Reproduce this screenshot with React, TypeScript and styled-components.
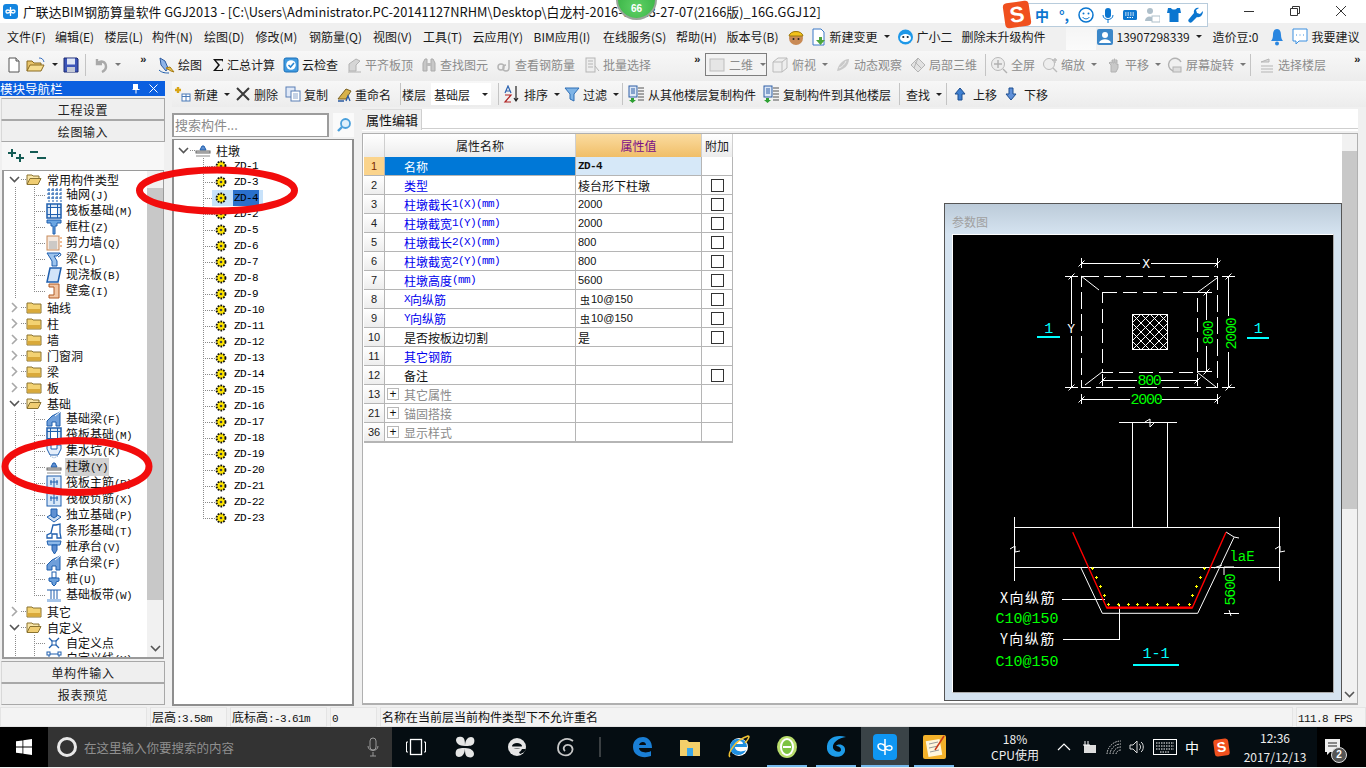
import React from 'react';
import styled, { createGlobalStyle } from 'styled-components';

const cjk = `"Noto Sans CJK SC", "Liberation Sans", sans-serif`;

const Global = createGlobalStyle`
  html, body { margin: 0; padding: 0; background: #f0f0f0; }
  * { box-sizing: border-box; }
  body { font-family: ${cjk}; font-size: 12px; color: #111; overflow: hidden; }
`;

const Page = styled.div`
  position: relative; width: 1366px; height: 768px; overflow: hidden;
  display: flex; flex-direction: column; background: #f0f0f0;
`;

/* ---------- title ---------- */
const TitleBar = styled.div`
  height: 23px; background: #fff; display: flex; align-items: center; padding: 0 0 1px 3px; flex: none;
`;
const AppLogo = styled.div`
  width: 15px; height: 15px; border-radius: 3px; background: #1485e0; display: flex;
  align-items: center; justify-content: center; margin-right: 5px; flex: none;
`;
const TitleText = styled.div`
  font-size: 12.8px; white-space: nowrap; color: #111; letter-spacing: 0.05px; flex: 1;
`;
const WinButtons = styled.div`display: flex; align-items: center; padding-right: 2px; flex: none;`;
const WinBtn = styled.div`width: 46px; height: 22px; display: flex; align-items: center; justify-content: center;`;

/* ---------- menu ---------- */
const MenuBar = styled.div`
  height: 27px; flex: none; position: relative; display: flex; align-items: center; background: #f0f0f0;
  padding-left: 7px; white-space: nowrap;
`;
const MenuItem = styled.div<{ $w: number }>`
  width: ${p => p.$w}px; flex: none; display: flex; align-items: center; gap: 3px; font-size: 12px; color: #1a1a1a;
`;
const WhitePatch = styled.div`width: 30px; height: 27px; flex: none; background: linear-gradient(#f4f4f4, #fbfbfb);`;
const Caret = styled.span`
  display: inline-block; flex: none; width: 0; height: 0; border-left: 3px solid transparent; border-right: 3px solid transparent;
  border-top: 3px solid #222; margin-left: 3px;
`;
const GreyCaret = styled(Caret)`border-top-color: #777;`;

/* ---------- toolbars ---------- */
const Bar = styled.div<{ $pad: number; $h: number; $lift?: number }>`
  height: ${p => p.$h}px; flex: none; display: flex; align-items: center; padding-left: ${p => p.$pad}px; padding-bottom: ${p => p.$lift ?? 0}px;
  background: linear-gradient(#f7f7f7, #f1f1f1 60%, #ececec); white-space: nowrap;
`;
const TopGap = styled.div`height: 1px; flex: none; background: #f0f0f0;`;
const Tool = styled.div<{ $w: number; $off?: boolean }>`
  width: ${p => p.$w}px; flex: none; display: flex; align-items: center; gap: 3px; height: 100%;
  font-size: 12px; color: ${p => (p.$off ? '#8c8c8c' : '#1a1a1a')}; position: relative;
`;
const Sep = styled.div`width: 1px; height: 22px; background: #c4c4c4;`;
const Grip = styled.span`font: bold 11px "Liberation Mono", monospace; color: #222; margin-top: -10px; letter-spacing: -2px;`;
const Combo = styled.div`
  width: 62px; height: 23px; border: 1px solid #7e7e7e; display: flex; align-items: center; gap: 4px; padding-left: 3px; color: #8c8c8c; background: #f3f3f3;
`;
const FloorCombo = styled.div`
  width: 60px; height: 22px; background: #fff; display: flex; align-items: center; justify-content: space-between; padding: 0 3px 0 3px; color: #1a1a1a;
`;
const MoveText = styled.span`margin-left: 4px;`;

/* ---------- main ---------- */
const Main = styled.div`height: 625px; flex: none; display: flex;`;
const Nav = styled.div`width: 165px; flex: none; display: flex; flex-direction: column;`;
const NavHead = styled.div`
  height: 15px; flex: none; background: #0b5fe0; color: #fff; font-size: 12.5px; line-height: 15px; padding: 0 4px 0 0;
  display: flex; justify-content: space-between; align-items: center;
`;
const NavIcons = styled.div`display: flex; gap: 9px; align-items: center; padding-right: 3px;`;
const NavBtn = styled.div<{ $mt?: number }>`
  height: 22px; margin: ${p => p.$mt ?? 0}px 0 0 1px; width: 164px; flex: none; border: 1px solid #a8a8a8; border-left-color: #d8d8d8; background: #efefef;
  display: flex; align-items: center; justify-content: center; font-size: 12px; letter-spacing: 0.6px; color: #222;
`;
const NavTools = styled.div`
  height: 28px; flex: none; margin: 0 1px 0 2px; display: flex; align-items: center; padding-left: 5px; gap: 5px; background: #f7f7f7;
`;
const TreeBox = styled.div`
  height: 489px; flex: none; margin: 0 1px 2px 2px; border: 2px solid #9a9a9a; border-top-width: 1px; border-right-width: 1px; background: #fff; position: relative; overflow: hidden;
`;
const Scroll = styled.div`
  position: absolute; right: 0; top: 0; bottom: 0; width: 16px; background: #f1f1f1; display: flex; flex-direction: column; align-items: center;
`;
const ScrollArrow = styled.div`height: 17px; flex: none; display: flex; align-items: center; justify-content: center;`;
const ScrollThumb = styled.div<{ $h: number }>`width: 100%; height: ${p => p.$h}px; background: #c8c8c8; flex: none;`;
const ScrollFill = styled.div`flex: 1;`;

const Row = styled.div<{ $guide?: boolean }>`
  height: 16px; display: flex; align-items: center; white-space: nowrap; font-size: 12px; color: #111;
  ${p => p.$guide ? `background: linear-gradient(#8a8a8a 50%, transparent 50%) 11px 0 / 1px 2px repeat-y;` : ''}
`;
const RootRow = styled(Row)`padding-left: 4px;`;
const Chev = styled.div`width: 13px; flex: none; display: flex; justify-content: center;`;
const RootStub = styled.div`width: 5px; flex: none; height: 1px; background: linear-gradient(90deg, #8a8a8a 50%, transparent 50%) 0 0 / 2px 1px;`;
const RootLabel = styled.span`margin-left: 5px;`;
const ChildRow = styled(Row)`padding-left: 30px;`;
const Stub = styled.div<{ $last?: boolean }>`
  width: 11px; height: 16px; flex: none;
  background:
    linear-gradient(#8a8a8a 50%, transparent 50%) 0 0 / 1px 2px repeat-y,
    linear-gradient(90deg, #8a8a8a 50%, transparent 50%) 0 8px / 2px 1px repeat-x;
  clip-path: ${p => (p.$last ? 'polygon(0 0, 1px 0, 1px 8px, 100% 8px, 100% 9px, 0 9px)' : 'polygon(0 0, 1px 0, 1px 8px, 100% 8px, 100% 9px, 1px 9px, 1px 100%, 0 100%)')};
`;
const ChildIcon = styled.div`width: 18px; height: 16px; flex: none; display: flex; align-items: center; justify-content: center; margin-right: 2px;`;
const ChildLabel = styled.span<{ $on?: boolean }>`
  ${p => p.$on ? 'background: #d2d2d2;' : ''} padding: 0 1px; line-height: 16px;
`;
const Latin = styled.span`font-family: "Liberation Mono", monospace; font-size: 11px; letter-spacing: -0.6px;`;

const Content = styled.div`flex: 1; margin-left: 7px; display: flex; flex-direction: column; min-width: 0;`;
const Panels = styled.div`flex: 1; display: flex; min-height: 0;`;
const Middle = styled.div`width: 182px; flex: none; display: flex; flex-direction: column; padding-top: 6px;`;
const SearchRow = styled.div`height: 25px; flex: none; display: flex; justify-content: space-between;`;
const SearchBox = styled.div`
  width: 157px; height: 24px; border: 2px solid #9c9c9c; border-bottom-width: 1px; background: #fff; color: #8a8a8a; font-size: 13px; padding-left: 1px; line-height: 20px;
`;
const SearchBtn = styled.div`width: 21px; height: 24px; background: #fafafa; display: flex; align-items: center; justify-content: center;`;
const CompTree = styled.div`
  flex: 1; margin-top: 1px; border: 2px solid #8e8e8e; border-top-width: 1px; background: #fff; padding-top: 2px; overflow: hidden;
`;
const CompRoot = styled(Row)`padding-left: 3px;`;
const CompRootLabel = styled.span`margin-left: 5px;`;
const CompRow = styled(Row)`padding-left: 29px;`;
const CompStub = styled(Stub)`width: 9px;`;
const CompSel = styled.div<{ $sel?: boolean }>`
  display: flex; align-items: center; width: 51px; height: 16px; padding-left: 3px; gap: 6px;
  background: ${p => p.$sel
    ? '#c8e2fa'
    : 'linear-gradient(#8a8a8a, #8a8a8a) 0 8px / 1px 1px no-repeat, linear-gradient(#8a8a8a, #8a8a8a) 2px 8px / 1px 1px no-repeat'};
`;
const CompName = styled.span<{ $sel?: boolean }>`
  font-family: "Liberation Mono", monospace; font-size: 11px; letter-spacing: -0.6px; line-height: 16px; padding: 0 1px; color: #000;
  ${p => p.$sel ? 'background: #2a70cc;' : ''}
`;

const Right = styled.div`flex: 1; margin-left: 8px; margin-right: 8px; display: flex; flex-direction: column; position: relative; margin-bottom: 1px;`;
const TabStrip = styled.div`height: 22px; flex: none; display: flex; margin-top: 2px; background: #fff;`;
const TabItem = styled.div`
  width: 60px; height: 21px; background: #f0f0f0; border-right: 1px solid #cfcfcf; border-top: 1px solid #ddd;
  font-size: 13px; padding-left: 4px; line-height: 19px;
`;
const TabLine = styled.div`flex: 1; border-bottom: 1px solid #cfcfcf; height: 20px;`;
const Sheet = styled.div`
  flex: 1; background: #fff; border: 1px solid #b0b0b0; border-width: 1px 1px 2px 1px; margin-top: 2px; position: relative; padding-left: 1px;
`;
const Grid = styled.div`
  display: grid; grid-template-columns: 21px 191px 126px 31px; grid-template-rows: 23px; grid-auto-rows: 19px; width: 369px;
  border-bottom: 1px solid #b5b5b5; border-right: 1px solid #b5b5b5;
`;
const HeadCell = styled.div<{ $active?: boolean }>`
  display: flex; align-items: center; justify-content: center; font-size: 12px;
  border-right: 1px solid #cfcfcf;
  background: ${p => (p.$active ? 'linear-gradient(#fbdca0, #f0be68)' : 'linear-gradient(#fff, #ececec)')};
  color: ${p => (p.$active ? '#7a0f86' : '#1a1a1a')};
`;
const NumCell = styled.div<{ $active?: boolean }>`
  display: flex; align-items: center; justify-content: center; font: 11px "Liberation Sans", sans-serif;
  background: ${p => (p.$active ? '#fbd48c' : 'linear-gradient(#fff, #ededed)')}; border-bottom: 1px solid #b5b5b5; border-right: 1px solid #b5b5b5;
  color: ${p => (p.$active ? '#7a2a00' : '#222')};
`;
const NameCell = styled.div<{ $tone: string }>`
  display: flex; align-items: center; padding-left: 19px; font-size: 12px; border-bottom: 1px solid #b5b5b5; border-right: 1px solid #b5b5b5; position: relative;
  color: ${p => (p.$tone === 'sel' ? '#fff' : p.$tone === 'blue' ? '#0000ee' : p.$tone === 'gray' ? '#8a8a8a' : '#111')};
  background: ${p => (p.$tone === 'sel' ? '#0078d7' : '#fff')};
`;
const Plus = styled.span`
  position: absolute; left: 2px; top: 3px; width: 12px; height: 12px; border: 1px solid #b8b8b8; display: flex; align-items: center; justify-content: center;
  color: #111; font: 12px/10px "Liberation Sans", sans-serif;
`;
const ValCell = styled.div<{ $sel?: boolean }>`
  display: flex; align-items: center; padding-left: 2px; font: 11px ${cjk}; border-bottom: 1px solid #b5b5b5; border-right: 1px solid #b5b5b5;
  background: ${p => (p.$sel ? '#d6e8f8' : '#fff')};
`;
const ValNum = styled.span`font: 11px "Liberation Sans", sans-serif;`;
const ValBold = styled.span`font: bold 11px "Liberation Mono", monospace; letter-spacing: -0.6px;`;
const ValCjk = styled.span`font: 12px ${cjk};`;
const RebarMark = styled.span`font: 10px ${cjk}; padding-left: 2px; margin-right: 1px;`;
const ValRebar = styled.span`font: 11px "Liberation Sans", sans-serif;`;
const AddCell = styled.div`display: flex; align-items: center; justify-content: center; border-bottom: 1px solid #b5b5b5;`;
const Check = styled.span`width: 13px; height: 13px; border: 1px solid #333; background: #fff; display: block;`;

const SheetScroll = styled(Scroll)`width: 15px; background: #f1f1f1;`;
const Preview = styled.div`
  position: absolute; left: 581px; top: 69px; width: 398px; height: 498px; border: 1px solid #555; background: #d5e3f0; display: flex; flex-direction: column;
`;
const PreviewHead = styled.div`
  height: 30px; flex: none; background: linear-gradient(#bccbd9, #d5e3f0); color: #a0a0a0; font-size: 12px; padding: 10px 0 0 7px; line-height: 16px;
`;
const PreviewBody = styled.div`flex: 1; margin: 0 7px 7px 7px; background: #000; border: 1px solid #fff; border-right-color: #aaa; border-bottom-color: #aaa; overflow: hidden;`;
const CadSvg = styled.svg`display: block; width: 382px; height: 459px; margin: -1px;`;

/* ---------- status ---------- */
const Status = styled.div`height: 21px; flex: none; display: flex; gap: 3px; background: #f0f0f0; padding-top: 1px;`;
const StatusCell = styled.div<{ $w: number; $grow?: boolean }>`
  ${p => (p.$grow ? 'flex: 1;' : `width: ${p.$w}px; flex: none;`)} height: 20px; background: #f3f3f3; border: 1px solid #e4e4e4;
  font-size: 12px; line-height: 18px; padding-left: 1px; white-space: nowrap;
`;

/* ---------- taskbar ---------- */
const Task = styled.div`height: 40px; flex: none; display: flex; align-items: center; background: #050d12; color: #fff; position: relative;`;
const StartBtn = styled.div`width: 48px; height: 40px; background: #000; display: flex; align-items: center; justify-content: center; flex: none;`;
const SearchBar = styled.div`
  width: 344px; height: 40px; background: #333; display: flex; align-items: center; padding: 0 13px 0 9px; color: #8f8f8f; font-size: 12.5px; flex: none;
`;
const Cortana = styled.div`width: 20px; height: 20px; border-radius: 50%; border: 3px solid #e8e8e8; margin-right: 7px; flex: none;`;
const SearchText = styled.span`flex: 1;`;
const TaskIcon = styled.div<{ $w: number; $active?: boolean; $run?: boolean }>`
  width: ${p => p.$w}px; height: 40px; flex: none; display: flex; align-items: center; justify-content: center; position: relative;
  ${p => p.$active ? 'background: #3a4347;' : ''}
  ${p => p.$run ? 'border-bottom: 2px solid #76b9ed; padding-top: 2px;' : ''}
`;
const TaskGap = styled.div<{ $w: number }>`width: ${p => p.$w}px; flex: none; height: 1px;`;
const TaskSep = styled.div`width: 2px; height: 20px; background: #3a3f42; flex: none;`;
const Cpu = styled.div`width: 70px; text-align: center; font-size: 12px; line-height: 16px; color: #eee; flex: none;`;
const Tray = styled.div<{ $w: number }>`width: ${p => p.$w}px; flex: none; display: flex; justify-content: center; align-items: center; height: 40px; font-size: 14px; color: #fff;`;
const Clock = styled.div`width: 84px; text-align: center; font-size: 12px; line-height: 19px; color: #eee; flex: none; white-space: nowrap;`;
const Notice = styled.div`flex: 1; height: 40px; display: flex; align-items: center; padding-left: 7px; position: relative; background: #000;`;
const NoticeBadge = styled.span`
  position: absolute; left: 14px; top: 20px; width: 16px; height: 16px; border-radius: 50%; background: #555; border: 1px solid #ddd; font: bold 10px/14px "Liberation Sans", sans-serif; text-align: center; color: #fff;
`;
const TraySogou = styled.span`
  display: block; width: 15px; height: 17px; background: #f0501e; border-radius: 3px; transform: rotate(-8deg); color: #fff; font: bold 14px/17px "Liberation Sans", sans-serif; text-align: center;
`;

/* ---------- overlays ---------- */
const Sogou = styled.div`
  position: absolute; left: 1020px; top: 3px; width: 188px; height: 24px; background: #fff; border: 1px solid #b8ccdc; display: flex; align-items: center; padding-left: 10px;
`;
const SogouLogo = styled.div`
  position: absolute; left: -17px; top: -2px; width: 26px; height: 25px; background: #f0501e; border-radius: 4px; transform: rotate(-8deg);
  color: #fff; font: bold 22px/25px "Liberation Sans", sans-serif; text-align: center;
`;
const SogouItem = styled.div`width: 22px; flex: none; display: flex; justify-content: center; align-items: center; color: #0b76d0; font: bold 14px ${cjk};`;
const Ball = styled.div`
  position: absolute; left: 616px; top: -21px; width: 41px; height: 41px; border-radius: 50%; border: 2px solid #9aa59a;
  background: radial-gradient(circle at 50% 70%, #5fd066, #2aa838); color: #fff; font: bold 10px "Liberation Sans", sans-serif; display: flex; justify-content: center; align-items: flex-end; padding-bottom: 4px;
`;
const Rings = styled.svg`position: absolute; left: 0; top: 0; pointer-events: none;`;

/* ---------- drawings ---------- */
const S = ({ w = 16, h = 16, children }: { w?: number; h?: number; children: React.ReactNode }) => (
  <svg width={w} height={h} viewBox={`0 0 ${w} ${h}`} style={{ flex: 'none', display: 'block' }}>{children}</svg>
);

const blue = '#1f5fae';
const IconDoc = () => <S><path d="M3 1h7l3 3v11H3z" fill="#fff" stroke="#555" /><path d="M10 1v3h3" fill="#ddd" stroke="#555" /></S>;
const IconOpen = () => <S w={20}><path d="M1 14V4h5l2 2h7v2" fill="#e8c46a" stroke="#8a6a20" /><path d="M1 14l3-6h14l-3 6z" fill="#f6dc8e" stroke="#8a6a20" /><path d="M13 1c3 0 4 1 5 4" stroke="#3a70c0" fill="none" /></S>;
const IconSave = () => <S><path d="M1 1h13l1 1v13H1z" fill="#3c55b8" stroke="#1d2b70" /><rect x="4" y="1.5" width="8" height="6" fill="#dfe6f5" /><rect x="4" y="10" width="8" height="5" fill="#c4c9d6" /></S>;
const IconUndo = () => <S><path d="M4 2v5h5M4 7c3-4 9-3 9 3 0 2-2 4-4 5" fill="none" stroke="#a9a9a9" strokeWidth="2.4" /></S>;
const IconDraw = () => <S w={18} h={18}><path d="M3 2l5 3 3 7-2 3-5-6z" fill="#8fb4e8" stroke="#2c5aa0" /><path d="M9 12l5 3 3 1-4-5z" fill="#e9c24e" stroke="#a67c14" /><path d="M2 14c3 3 7 3 10 3" stroke={blue} fill="none" /></S>;
const IconSigma = () => <S><path d="M3 2h10v3l-1-1.5H6l4 4.5-4 5h6l1-2v3H3l5-6z" fill="#111" /></S>;
const IconCloud = () => <S><rect x="1" y="1" width="14" height="14" rx="2" fill="#3f9ae0" stroke="#1a6fb8" /><circle cx="8" cy="8" r="4.8" fill="#fff" /><path d="M5.5 8l2 2 3.5-4" stroke="#2a86d0" strokeWidth="1.6" fill="none" /></S>;
const IconAlign = () => <S><path d="M3 14V7l7-5 4 2-4 4v6z" fill="#d6d6d6" stroke="#b2b2b2" /><path d="M2 15h13" stroke="#b2b2b2" /></S>;
const IconBino = () => <S><path d="M2 14V6l2-4h2v12zM10 14V2h2l2 4v8z" fill="#c7c7c7" stroke="#ababab" /><rect x="6" y="6" width="4" height="3" fill="#bbb" /></S>;
const IconLink = () => <S><circle cx="5" cy="10" r="3" fill="none" stroke="#b5b5b5" strokeWidth="1.5" /><path d="M13 3v8a3 3 0 1 1-3-3" fill="none" stroke="#b5b5b5" strokeWidth="1.5" /></S>;
const IconBatch = () => <S><rect x="2" y="1" width="9" height="14" fill="#eee" stroke="#b5b5b5" /><path d="M4 4h5M4 7h5M4 10h5M11 9l4 5" stroke="#b5b5b5" /></S>;
const IconBox2D = () => <S><rect x="1" y="2" width="14" height="12" fill="#e6e6e6" stroke="#bdbdbd" /></S>;
const IconTop = () => <S w={18} h={18}><path d="M2 6l5-4h9v10l-5 4H2z" fill="#eee" stroke="#bbb" /><path d="M2 6h9v10M11 6l5-4" fill="none" stroke="#bbb" /></S>;
const IconOrbit = () => <S><path d="M2 14C3 8 8 2 14 2c0 6-5 11-12 12z" fill="#c9c9c9" /><path d="M4 11c3-1 6-4 7-7" stroke="#eee" fill="none" /></S>;
const IconLocal = () => <S><path d="M8 1l7 7-7 7-7-7z" fill="#e2e2e2" stroke="#b4b4b4" /><path d="M4 4l7 7M8 1L4 11" stroke="#b4b4b4" /></S>;
const IconFull = () => <S w={18} h={18}><circle cx="8" cy="8" r="6.5" fill="#ececec" stroke="#b8b8b8" /><path d="M8 4v8M4 8h8M13 13l4 4" stroke="#b0b0b0" strokeWidth="1.4" /></S>;
const IconZoom = () => <S><circle cx="7" cy="7" r="5.5" fill="#eee" stroke="#bbb" /><path d="M11 11l4 4M13 1v5M10 3h5" stroke="#bbb" strokeWidth="1.4" /></S>;
const IconPan = () => <S><path d="M5 15V8L3 6l1-1 2 1V3h1v3h1V2h1v4h1V3h1v5l1-1v4l-2 4z" fill="#c8c8c8" stroke="#b2b2b2" /></S>;
const IconRot = () => <S><path d="M13 12A6.5 6.5 0 1 1 14 5" fill="#f0f0f0" stroke="#b2b2b2" strokeWidth="1.4" /><rect x="6" y="10" width="8" height="5" fill="#ddd" stroke="#b2b2b2" /></S>;
const IconFloors = () => <S><path d="M2 5l8-3v3H2zM2 9h12M2 12h12M2 15h12" stroke="#b5b5b5" fill="#ddd" /></S>;
const IconNew = () => <S w={17}><path d="M4 1v6M1 4h6" stroke="#d8a414" strokeWidth="2.4" /><rect x="8" y="8" width="8" height="7" fill="#fff" stroke="#4a7ab8" /><path d="M8 10.5h8M12 8v7" stroke="#4a7ab8" /></S>;
const IconX = () => <S><path d="M2 2l12 12M14 2L2 14" stroke="#3a3a3a" strokeWidth="2" /></S>;
const IconCopy = () => <S><rect x="1" y="1" width="9" height="10" fill="#dfe8f7" stroke="#5a7fb5" /><rect x="6" y="5" width="9" height="10" fill="#fff" stroke="#5a7fb5" /><path d="M8 8h5M8 10h5M8 12h5" stroke="#8aa4cc" /></S>;
const IconRename = () => <S><path d="M2 13L10 3l5 2-5 8z" fill="#d8b24a" stroke="#7a6020" /><path d="M2 15h6M10 15l2-5 2 5" stroke="#2a5aa0" strokeWidth="1.3" fill="none" /></S>;
const IconSort = () => <S w={18} h={18}><path d="M2 8l3-7 3 7M3 6h4" stroke="#2c63b0" fill="none" strokeWidth="1.2" /><path d="M2 10h6L2 17h6" stroke="#b02020" fill="none" strokeWidth="1.2" /><path d="M13 1v15M11 13l2 3 2-3" stroke="#222" fill="none" strokeWidth="1.2" /></S>;
const IconFilter = () => <S><path d="M1 2h14L10 8v7l-4-2V8z" fill="#7fb4e6" stroke="#2f6eb5" /></S>;
const IconCopyFrom = () => <S w={17} h={18}><rect x="1" y="1" width="8" height="11" fill="#dce7f6" stroke="#2e5fa5" /><path d="M3 4h4M3 6h4M3 8h4" stroke="#2e5fa5" /><path d="M10 3h6M10 6h6M10 9h6M10 12h6M10 15h6" stroke="#555" /><path d="M3 13h3v2h2l-3.500 3L1 15h2z" fill="#2ea033" /></S>;
const IconUp = () => <S w={12}><path d="M6 2l5 6H8v6H4V8H1z" fill="#3e7fd0" stroke="#1d4e90" /></S>;
const IconDown = () => <S w={12}><path d="M6 14l5-6H8V2H4v6H1z" fill="#5e8fd8" stroke="#1d4e90" /></S>;
const IconMan = () => <S w={18} h={18}><circle cx="9" cy="10" r="7" fill="#c98a55" /><path d="M2 8c1-6 13-6 14 0z" fill="#f2c21b" stroke="#9c7a10" /><circle cx="6.500" cy="11" r="1" fill="#222" /><circle cx="11.500" cy="11" r="1" fill="#222" /></S>;
const IconChange = () => <S w={17} h={18}><path d="M3 1h8l3 3v13H3z" fill="#fff" stroke="#3a78c8" /><path d="M9 9h3v3h3l-4.500 5L6 12h3z" fill="#4da53c" /></S>;
const IconBot = () => <S w={17} h={18}><circle cx="8.500" cy="9" r="7.500" fill="#1e98e8" /><ellipse cx="8.500" cy="10" rx="5.500" ry="4" fill="#fff" /><circle cx="6.300" cy="9" r="1.100" fill="#123" /><circle cx="10.700" cy="9" r="1.100" fill="#123" /></S>;
const IconUser = () => <S w={18} h={18}><rect x="1" y="1" width="16" height="16" rx="2" fill="#3b87c9" /><circle cx="9" cy="7" r="3" fill="#fff" /><path d="M3 15c1-5 11-5 12 0z" fill="#fff" /></S>;
const IconBell = () => <S h={18}><path d="M8 1c3 0 4 3 4 6s1 5 2 6H2c1-1 2-3 2-6s1-6 4-6z" fill="#2a86e0" /><circle cx="8" cy="15.500" r="2" fill="#2a86e0" /></S>;
const IconChat = () => <S w={18} h={18}><path d="M2 1h14v12H8l-3 3v-3H2z" fill="#fff" stroke="#3a8fe0" /><path d="M5 7h1M8.500 7h1M12 7h1" stroke="#3a8fe0" /></S>;

const ChevDown = ({ c = '#555' }: { c?: string }) => <svg width="11" height="7" viewBox="0 0 11 7" style={{ display: 'block' }}><path d="M1 1l4.500 4.500L10 1" fill="none" stroke={c} strokeWidth="1.6" /></svg>;
const ChevRight = () => <svg width="7" height="11" viewBox="0 0 7 11" style={{ display: 'block' }}><path d="M1 1l4.500 4.500L1 10" fill="none" stroke="#a8a8a8" strokeWidth="1.6" /></svg>;

const FolderClosed = () => <S w={16} h={14}><path d="M1 3h5l1 1h8v9H1z" fill="#f3d272" stroke="#8a7330" /><rect x="1.500" y="9" width="13" height="3.500" fill="#d9a93a" /></S>;
const FolderOpen = () => <S w={16} h={14}><path d="M1 12V3h5l1 1h6v3" fill="#fae6a8" stroke="#8a7330" /><path d="M1 12.500L4 6.500h11l-3 6z" fill="#f0cd72" stroke="#8a7330" /></S>;

const Gear = () => <S w={12} h={12}><circle cx="6" cy="6" r="4.400" fill="#ffe600" stroke="#111" strokeWidth="2" strokeDasharray="1.700 1.100" /><circle cx="6" cy="6" r="3.200" fill="#ffe600" /><circle cx="6" cy="6" r="1.300" fill="#444" /></S>;

type TI = 'grid' | 'raft' | 'col' | 'wall' | 'beam' | 'slab' | 'niche' | 'base' | 'pit' | 'pier' | 'rafN' | 'iso' | 'strip' | 'cap' | 'pile' | 'band' | 'pt' | 'line';
const TreeIcon = ({ k }: { k: TI }) => {
  switch (k) {
    case 'grid': return <S><path d="M3 1v14M7 1v14M11 1v14M15 1v14M1 3h14M1 7h14M1 11h14" stroke={blue} fill="none" strokeDasharray="3 1" /></S>;
    case 'raft': return <S><rect x="1" y="1" width="14" height="14" fill="#dbe8f7" stroke={blue} strokeWidth="1.500" /><rect x="4.500" y="4.500" width="7" height="7" fill="#fff" stroke={blue} /><path d="M1 4.500h14M1 11.500h14M4.500 1v14M11.500 1v14" stroke={blue} /></S>;
    case 'col': return <S><path d="M1 1h14v3h-4v3H9v8H7V7H5V4H1z" fill="#6aa5e2" stroke={blue} /></S>;
    case 'wall': return <S><rect x="1" y="1" width="12" height="14" fill="#f5e9df" stroke="#c88a5a" /><rect x="3" y="6" width="8" height="8" fill="#bbb" opacity=".7" /><path d="M14 3h2M14 7h2M14 11h2" stroke="#e07a2a" /></S>;
    case 'beam': return <S><path d="M1 2h13l-3 3H8l3 5v5H6v-5z" fill="#9cc4ee" stroke={blue} /><path d="M14 2l1 2-3 2" stroke={blue} fill="none" /></S>;
    case 'slab': return <S><path d="M4 1h11l-3 14H1z" fill="#d2e4f8" stroke={blue} strokeWidth="1.500" /></S>;
    case 'niche': return <S><path d="M3 1h10v14H3v-3h5v-8H3z" fill="#f2c6a4" stroke="#b05a24" /></S>;
    case 'base': return <S><path d="M1 15v-5l5-5 8-4v14h-4v-4H6v4z" fill="#6f9fda" stroke={blue} /><path d="M9 5l5-4" stroke="#fff" /></S>;
    case 'pit': return <S><path d="M1 2h4v4h6V2h4v4l-3 6H4L1 6z" fill="#e4eefa" stroke={blue} /><path d="M4 13l4 2 4-2" stroke="#7aa0cc" fill="none" strokeDasharray="1 1" /></S>;
    case 'pier': return <S><path d="M5 8l2-4h2l2 4z" fill="#5e8ed0" stroke={blue} /><rect x="1" y="9" width="14" height="2" fill="#ddd" stroke="#666" /><path d="M1 14h14" stroke="#888" /></S>;
    case 'rafN': return <S><rect x="1" y="1" width="14" height="14" fill="#d9e8f8" stroke={blue} /><path d="M8 3v10M4 7h8M5 5v5M11 5v5" stroke={blue} fill="none" /></S>;
    case 'iso': return <S><path d="M1 10l7-4 7 4-7 5z" fill="#cfe0f4" stroke={blue} /><path d="M5 2h6v7l-3 2-3-2z" fill="#5f90d2" stroke={blue} /></S>;
    case 'strip': return <S><path d="M1 15v-3l4-2 2-8h3l4-1v9l1 5H11V11H6v4z" fill="#fff" stroke={blue} strokeWidth="1.300" /></S>;
    case 'cap': return <S><path d="M1 2h14l-1 4H2z" fill="#8db8e8" stroke={blue} /><path d="M6 6h5v5l-2.500 4L6 11z" fill="#5e8ed0" stroke={blue} /></S>;
    case 'pile': return <S><rect x="6" y="1" width="4" height="6" fill="#fff" stroke={blue} /><path d="M3 7h10v3l-3 1v2l-2 2-2-2v-2l-3-1z" fill="#6aa0dc" stroke={blue} /></S>;
    case 'band': return <S><path d="M1 3h14M1 14h14M5 3v11M11 3v11M8 3v11" stroke={blue} fill="none" /><rect x="1" y="12" width="14" height="3" fill="#a5c5ea" /></S>;
    case 'pt': return <S><path d="M3 3l10 10M13 3L3 13" stroke={blue} strokeWidth="1.300" /><rect x="6" y="6" width="4" height="4" fill="#fff" stroke={blue} /></S>;
    case 'line': return <S><path d="M3 3h10M3 3v10M13 3v10" stroke={blue} fill="none" /><rect x="1" y="1" width="3" height="3" fill="#fff" stroke={blue} /><rect x="12" y="1" width="3" height="3" fill="#fff" stroke={blue} /></S>;
  }
};

/* ---------- helpers ---------- */
const Mixed = ({ t }: { t: string }) => (
  <>{t.split(/([\x00-\x7f]+)/).map((s, i) => (/^[\x00-\x7f]+$/.test(s) ? <Latin key={i}>{s}</Latin> : s))}</>
);

type Item = { x: number; node: React.ReactNode; off?: boolean };
const Spread = ({ items, end }: { items: Item[]; end: number }) => (
  <>
    {items.map((it, i) => (
      <Tool key={i} $off={it.off} $w={(i + 1 < items.length ? items[i + 1].x : end) - it.x}>{it.node}</Tool>
    ))}
  </>
);

const T = (x: number, icon: React.ReactNode, text?: string, dd?: 'k' | 'g') => ({
  x,
  node: <>{icon}{text && <span>{text}</span>}{dd === 'k' && <Caret />}{dd === 'g' && <GreyCaret />}</>,
});
const Off = (x: number, icon: React.ReactNode, text?: string, dd?: boolean) => ({ ...T(x, icon, text, dd ? 'g' : undefined), off: true });

const bar1: Item[] = [
  T(6, <IconDoc />), T(26, <IconOpen />, undefined, 'k'), T(63, <IconSave />),
  { x: 85, node: <Sep /> },
  Off(93, <IconUndo />, undefined, true), { x: 140, node: <Grip>»</Grip> },
  T(157, <IconDraw />, '绘图'), T(210, <IconSigma />),
  { x: 227, node: <span>汇总计算</span> }, T(283, <IconCloud />, '云检查'),
  Off(346, <IconAlign />, '平齐板顶'), Off(421, <IconBino />, '查找图元'), Off(496, <IconLink />, '查看钢筋量'), Off(584, <IconBatch />, '批量选择'),
  { x: 694, node: <Grip>»</Grip> },
  { x: 705, node: <Combo><IconBox2D /><span>二维</span><GreyCaret /></Combo> },
  Off(771, <IconTop />, '俯视', true), Off(835, <IconOrbit />, '动态观察'), Off(910, <IconLocal />, '局部三维'),
  { x: 985, node: <Sep /> },
  Off(990, <IconFull />, '全屏'), Off(1042, <IconZoom />, '缩放', true), Off(1106, <IconPan />, '平移', true), Off(1167, <IconRot />, '屏幕旋转', true),
  { x: 1250, node: <Sep /> },
  Off(1259, <IconFloors />, '选择楼层'),
  { x: 1354, node: <Grip>»</Grip> },
];

const bar2: Item[] = [
  T(174, <IconNew />, '新建', 'k'), T(235, <IconX />, '删除'), T(285, <IconCopy />, '复制'), T(336, <IconRename />, '重命名'),
  { x: 400, node: <Sep /> },
  { x: 402, node: <span>楼层</span> },
  { x: 431, node: <FloorCombo><span>基础层</span><Caret /></FloorCombo> },
  { x: 498, node: <Sep /> },
  T(503, <IconSort />, '排序', 'k'), T(564, <IconFilter />, '过滤', 'k'),
  { x: 622, node: <Sep /> },
  T(628, <IconCopyFrom />, '从其他楼层复制构件'), T(763, <IconCopyFrom />, '复制构件到其他楼层'),
  { x: 899, node: <Sep /> },
  { x: 906, node: <><span>查找</span><Caret /></> },
  { x: 946, node: <Sep /> },
  { x: 954, node: <><IconUp /><MoveText>上移</MoveText></> },
  { x: 1005, node: <><IconDown /><MoveText>下移</MoveText></> },
];

const menus: [string, number][] = [
  ['文件(F)', 48], ['编辑(E)', 49.5], ['楼层(L)', 47.5], ['构件(N)', 52], ['绘图(D)', 51.5], ['修改(M)', 53.5], ['钢筋量(Q)', 64], ['视图(V)', 50], ['工具(T)', 49.5],
  ['云应用(Y)', 61], ['BIM应用(I)', 69.5], ['在线服务(S)', 73], ['帮助(H)', 50.5],
];

type TreeNode = { t: string; open?: boolean; kids?: [string, TI][] };
const tree: TreeNode[] = [
  { t: '常用构件类型', open: true, kids: [['轴网(J)', 'grid'], ['筏板基础(M)', 'raft'], ['框柱(Z)', 'col'], ['剪力墙(Q)', 'wall'], ['梁(L)', 'beam'], ['现浇板(B)', 'slab'], ['壁龛(I)', 'niche']] },
  { t: '轴线' }, { t: '柱' }, { t: '墙' }, { t: '门窗洞' }, { t: '梁' }, { t: '板' },
  { t: '基础', open: true, kids: [['基础梁(F)', 'base'], ['筏板基础(M)', 'raft'], ['集水坑(K)', 'pit'], ['柱墩(Y)', 'pier'], ['筏板主筋(R)', 'rafN'], ['筏板负筋(X)', 'rafN'], ['独立基础(P)', 'iso'], ['条形基础(T)', 'strip'], ['桩承台(V)', 'cap'], ['承台梁(F)', 'base'], ['桩(U)', 'pile'], ['基础板带(W)', 'band']] },
  { t: '其它' },
  { t: '自定义', open: true, kids: [['自定义点', 'pt'], ['自定义线(X)', 'line']] },
];

const zd = ['1', '3', '4', '2', ...Array.from({ length: 19 }, (_, i) => String(i + 5))];

const Rebar = () => <><RebarMark>虫</RebarMark><ValRebar>10@150</ValRebar></>;

type PRow = { n: number; name: string; tone: string; val?: React.ReactNode; chk?: boolean; plus?: boolean };
const props: PRow[] = [
  { n: 1, name: '名称', tone: 'sel', val: <ValBold>ZD-4</ValBold> },
  { n: 2, name: '类型', tone: 'blue', val: <ValCjk>棱台形下柱墩</ValCjk>, chk: true },
  { n: 3, name: '柱墩截长1(X)(mm)', tone: 'blue', val: <ValNum>2000</ValNum>, chk: true },
  { n: 4, name: '柱墩截宽1(Y)(mm)', tone: 'blue', val: <ValNum>2000</ValNum>, chk: true },
  { n: 5, name: '柱墩截长2(X)(mm)', tone: 'blue', val: <ValNum>800</ValNum>, chk: true },
  { n: 6, name: '柱墩截宽2(Y)(mm)', tone: 'blue', val: <ValNum>800</ValNum>, chk: true },
  { n: 7, name: '柱墩高度(mm)', tone: 'blue', val: <ValNum>5600</ValNum>, chk: true },
  { n: 8, name: 'X向纵筋', tone: 'blue', val: <Rebar />, chk: true },
  { n: 9, name: 'Y向纵筋', tone: 'blue', val: <Rebar />, chk: true },
  { n: 10, name: '是否按板边切割', tone: 'black', val: <ValCjk>是</ValCjk>, chk: true },
  { n: 11, name: '其它钢筋', tone: 'blue' },
  { n: 12, name: '备注', tone: 'black', chk: true },
  { n: 13, name: '其它属性', tone: 'gray', plus: true },
  { n: 21, name: '锚固搭接', tone: 'gray', plus: true },
  { n: 36, name: '显示样式', tone: 'gray', plus: true },
];

const W = '#fff', GR = '#00ff00', CY = '#00ffff', MONO = '"Liberation Mono", monospace';
const Tick = ({ x, y }: { x: number; y: number }) => <path d={`M${x - 3} ${y + 3}L${x + 3} ${y - 3}`} stroke={W} fill="none" />;
const Cad = () => {
  const hatch: React.ReactNode[] = [];
  for (let i = -36; i < 36; i += 9) {
    hatch.push(<path key={`a${i}`} d={`M${1133 + i} 314l36 36`} />);
    hatch.push(<path key={`b${i}`} d={`M${1133 + i} 350l36 -36`} />);
  }
  const dots = [[460, 355], [472, 382], [484, 409], [496, 436], [508, 463], [538, 463], [568, 463], [595, 463], [625, 463], [655, 463], [685, 463], [718, 463], [751, 463], [760, 436], [772, 409], [784, 382], [796, 355]];
  return (
    <CadSvg viewBox="953 234 382 459">
      <defs><clipPath id="hc"><rect x="1133" y="314" width="36" height="36" /></clipPath></defs>
      <g fill="none" stroke={W} strokeWidth="1" shapeRendering="crispEdges">
        <rect x="1082.500" y="276.500" width="136" height="111" strokeDasharray="17 5" />
        <rect x="1103.500" y="292.500" width="95" height="80" strokeDasharray="14 6" />
        <path d="M1072.500 276v48M1072.500 336v51M1066 276.500h13M1066 387.500h13M1229.500 276v40M1229.500 352v35M1223 276.500h13M1223 387.500h13M1082 263.500h59M1152 263.500h66M1082.500 258v10M1218.500 258v10" />
        <path d="M1207.500 292v28M1207.500 346v25M1198 292.500h15M1198 371.500h15M1103 380.500h35M1162 380.500h36M1103.500 374v12M1198.500 374v12" />
        <path d="M1082 399.500h49M1163 399.500h55M1082.500 394v10M1218.500 394v10M1133.500 422v105M1168.500 422v105M1120 422.500h58" />
        <path d="M1015.500 517v64M1280.500 517v64M1016 527.500h264M1016 567.500h264" />
        <path d="M1063 599.500h43M1064 639.500h56M1120.500 604v36" />
      </g>
      <g fill="none" stroke={W}>
        <path d="M1082 276l18 14M1218 278l-19 14M1086 385l17-13M1198 372l19 15" />
        <Tick x={1082.500} y={263.500} /><Tick x={1218.500} y={263.500} /><Tick x={1072.500} y={276.500} /><Tick x={1072.500} y={387.500} /><Tick x={1229.500} y={276.500} /><Tick x={1229.500} y={387.500} />
        <Tick x={1207.500} y={292.500} /><Tick x={1207.500} y={371.500} /><Tick x={1103.500} y={380.500} /><Tick x={1198.500} y={380.500} /><Tick x={1082.500} y={399.500} /><Tick x={1218.500} y={399.500} />
        <path d="M1146 422l5-3v8l4-4" />
        <path d="M1011 549l5-3v6l5-1M1276 549l5-3v6l5-1" />
        <path d="M1081.700 567.300l21.600 46h95.400L1235 537.300M1227 532l8 5 5 1" />
        <path d="M1225 575v-8M1225 613.500h15M1230 610l2 6M1215 568l8-3M1225 567h10" />
      </g>
      <rect x="1133" y="314" width="36" height="36" fill="#000" />
      <g clipPath="url(#hc)" stroke={W} fill="none" strokeWidth="1">{hatch}</g>
      <rect x="1133.500" y="314.500" width="35" height="35" fill="none" stroke={W} />
      <path d="M1073.700 532.300L1107.700 607.700H1193.300L1227 532.300" fill="none" stroke="#ff0000" strokeWidth="1.400" />
      <path d="M1107.700 607.700H1193.300" fill="none" stroke="#ff0000" strokeWidth="2.200" />
      <g stroke="#ffff00" strokeWidth="1" shapeRendering="crispEdges">
        {dots.map(([a, b], i) => { const x = 940 + a / 3, y = 450 + b / 3; return <path key={i} d={`M${x - 1.500} ${y}h3M${x} ${y - 1.500}v3`} />; })}
      </g>
      <g stroke={CY} strokeWidth="2" shapeRendering="crispEdges"><path d="M1038 336.500h23M1248 337.500h22M1134 665h46" /></g>
      <g fontFamily={MONO} fontSize="15" letterSpacing="-1.300">
        <text x="1146.500" y="268" fill={W} textAnchor="middle" fontSize="13">X</text>
        <text x="1071.500" y="333" fill={W} textAnchor="middle" fontSize="13">Y</text>
        <text x="1049" y="333" fill={CY} textAnchor="middle">1</text>
        <text x="1258.500" y="333" fill={CY} textAnchor="middle">1</text>
        <text x="1150" y="385" fill={GR} textAnchor="middle">800</text>
        <text x="1147" y="404" fill={GR} textAnchor="middle">2000</text>
        <text transform="translate(1214 333) rotate(-90)" fill={GR} textAnchor="middle">800</text>
        <text transform="translate(1237 334) rotate(-90)" fill={GR} textAnchor="middle">2000</text>
        <text transform="translate(1236 590) rotate(-90)" fill={GR} textAnchor="middle">5600</text>
        <text x="1243" y="561" fill={GR} textAnchor="middle" fontSize="14" letterSpacing="0">laE</text>
        <text x="1028" y="623" fill={GR} textAnchor="middle" fontSize="15" letterSpacing="0">C10@150</text>
        <text x="1028" y="666" fill={GR} textAnchor="middle" fontSize="15" letterSpacing="0">C10@150</text>
        <text x="1157" y="658" fill={CY} textAnchor="middle" letterSpacing="0">1-1</text>
        <text x="1029" y="603" fill={W} textAnchor="middle" fontFamily={cjk} fontSize="14" letterSpacing="1.500">X向纵筋</text>
        <text x="1029" y="644" fill={W} textAnchor="middle" fontFamily={cjk} fontSize="14" letterSpacing="1.500">Y向纵筋</text>
      </g>
    </CadSvg>
  );
};

const WinLogo = () => <S w={16} h={16}><path d="M0 2.300l6.500-.9v6.200H0zM7.300 1.300L16 0v7.600H7.300zM0 8.400h6.500v6.200L0 13.700zM7.300 8.400H16V16l-8.700-1.200z" fill="#fff" /></S>;

const App = () => (
  <Page>
    <Global />
    <TitleBar>
      <AppLogo><S w={11} h={11}><path d="M5.500 1v9M1 5.500c0-2 3-2 4.500 0s4.500 2 4.500 0-3-2-4.500 0-4.500 2-4.500 0z" stroke="#fff" fill="none" strokeWidth="1.300" /></S></AppLogo>
      <TitleText>广联达BIM钢筋算量软件 GGJ2013 - [C:\Users\Administrator.PC-20141127NRHM\Desktop\白龙村-2016-08-23-27-07(2166版)_16G.GGJ12]</TitleText>
      <WinButtons>
        <WinBtn><S w={12} h={12}><path d="M1 6.500h10" stroke="#333" /></S></WinBtn>
        <WinBtn><S w={12} h={12}><path d="M1.500 3.500h7v7h-7zM3.500 3.500v-2h7v7h-2" stroke="#333" fill="none" /></S></WinBtn>
        <WinBtn><S w={12} h={12}><path d="M1 1l10 10M11 1L1 11" stroke="#333" /></S></WinBtn>
      </WinButtons>
    </TitleBar>

    <MenuBar>
      {menus.map(([m, w]) => <MenuItem key={m} $w={w}>{m}</MenuItem>)}
      <MenuItem $w={60}>版本号(B)</MenuItem>
      <MenuItem $w={23}><IconMan /></MenuItem>
      <MenuItem $w={87}><IconChange />新建变更<Caret /></MenuItem>
      <MenuItem $w={65}><IconBot />广小二</MenuItem>
      <MenuItem $w={104}>删除未升级构件</MenuItem>
      <WhitePatch />
      <MenuItem $w={117}><IconUser />13907298339<Caret /></MenuItem>
      <MenuItem $w={56}>造价豆:0</MenuItem>
      <MenuItem $w={22}><IconBell /></MenuItem>
      <MenuItem $w={70}><IconChat />我要建议</MenuItem>
    </MenuBar>

    <TopGap />
    <Bar $pad={6} $h={30} $lift={3}><Spread items={bar1} end={1366} /></Bar>

    <Main>
      <Nav>
        <NavHead>
          模块导航栏
          <NavIcons>
            <S w={9} h={11}><path d="M2 1h5v5h1.500v1h-3v3.500h-1V7h-3V6H2z" fill="#fff" /></S>
            <S w={9} h={9}><path d="M.500.500l8 8M8.500.500l-8 8" stroke="#fff" /></S>
          </NavIcons>
        </NavHead>
        <NavBtn $mt={2}>工程设置</NavBtn>
        <NavBtn>绘图输入</NavBtn>
        <NavTools>
          <S w={18} h={18}><path d="M5 2v8M1 6h8M13 7v8M9 11h8" stroke="#155c55" strokeWidth="2" /></S>
          <S w={18} h={18}><path d="M0 5h8M7 11h9" stroke="#155c55" strokeWidth="2" /></S>
        </NavTools>
        <TreeBox>
          {tree.map(n => (
            <React.Fragment key={n.t + (n.open ? 'o' : '')}>
              <RootRow>
                <Chev>{n.open ? <ChevDown /> : <ChevRight />}</Chev>
                <RootStub />
                {n.open ? <FolderOpen /> : <FolderClosed />}
                <RootLabel>{n.t}</RootLabel>
              </RootRow>
              {n.kids?.map(([t, k], i) => (
                <ChildRow key={t + i} $guide>
                  <Stub $last={i === (n.kids as [string, TI][]).length - 1} />
                  <ChildIcon><TreeIcon k={k} /></ChildIcon>
                  <ChildLabel $on={t === '柱墩(Y)'}><Mixed t={t} /></ChildLabel>
                </ChildRow>
              ))}
            </React.Fragment>
          ))}
          <Scroll>
            <ScrollArrow />
            <ScrollThumb $h={412} />
            <ScrollFill />
            <ScrollArrow><ChevDown /></ScrollArrow>
          </Scroll>
        </TreeBox>
        <NavBtn>单构件输入</NavBtn>
        <NavBtn>报表预览</NavBtn>
      </Nav>

      <Content>
        <Bar $pad={2} $h={26}><Spread items={bar2} end={1366} /></Bar>
        <Panels>
          <Middle>
            <SearchRow>
              <SearchBox>搜索构件...</SearchBox>
              <SearchBtn><S w={16} h={16}><circle cx="9.500" cy="6.500" r="4.500" fill="#dff0fb" stroke="#4aa0dc" strokeWidth="1.800" /><path d="M6 10l-4 4" stroke="#4aa0dc" strokeWidth="2.400" /></S></SearchBtn>
            </SearchRow>
            <CompTree>
              <CompRoot>
                <Chev><ChevDown /></Chev>
                <RootStub />
                <TreeIcon k="pier" />
                <CompRootLabel>柱墩</CompRootLabel>
              </CompRoot>
              {zd.map((z, i) => (
                <CompRow key={z}>
                  <CompStub $last={i === zd.length - 1} />
                  <CompSel $sel={z === '4'}>
                    <Gear />
                    <CompName $sel={z === '4'}>ZD-{z}</CompName>
                  </CompSel>
                </CompRow>
              ))}
            </CompTree>
          </Middle>

          <Right>
            <TabStrip><TabItem>属性编辑</TabItem><TabLine /></TabStrip>
            <Sheet>
              <Grid>
                <HeadCell />
                <HeadCell>属性名称</HeadCell>
                <HeadCell $active>属性值</HeadCell>
                <HeadCell>附加</HeadCell>
                {props.map(p => (
                  <React.Fragment key={p.n}>
                    <NumCell $active={p.n === 1}>{p.n}</NumCell>
                    <NameCell $tone={p.tone}>{p.plus && <Plus>+</Plus>}<Mixed t={p.name} /></NameCell>
                    <ValCell $sel={p.n === 1}>{p.val}</ValCell>
                    <AddCell>{p.chk && <Check />}</AddCell>
                  </React.Fragment>
                ))}
              </Grid>
              <SheetScroll>
                <ScrollArrow />
                <ScrollThumb $h={358} />
                <ScrollFill />
                <ScrollArrow><ChevDown /></ScrollArrow>
              </SheetScroll>
              <Preview>
                <PreviewHead>参数图</PreviewHead>
                <PreviewBody><Cad /></PreviewBody>
              </Preview>
            </Sheet>
          </Right>
        </Panels>
      </Content>
    </Main>

    <Status>
      <StatusCell $w={147} />
      <StatusCell $w={77}>层高<Mixed t=":3.58m" /></StatusCell>
      <StatusCell $w={97}>底标高<Mixed t=":-3.61m" /></StatusCell>
      <StatusCell $w={47}><Mixed t="0" /></StatusCell>
      <StatusCell $w={0} $grow>名称在当前层当前构件类型下不允许重名</StatusCell>
      <StatusCell $w={70}><Mixed t="111.8 FPS" /></StatusCell>
    </Status>

    <Task>
      <StartBtn><WinLogo /></StartBtn>
      <SearchBar>
        <Cortana />
        <SearchText>在这里输入你要搜索的内容</SearchText>
        <S w={12} h={20}><rect x="3" y="1" width="6" height="12" rx="3" fill="none" stroke="#9a9a9a" /><path d="M1 9c0 6 10 6 10 0M6 15v4M3 19h6" stroke="#9a9a9a" fill="none" /></S>
      </SearchBar>
      <TaskIcon $w={48}><S w={20} h={18}><rect x="4.500" y="1.500" width="11" height="15" fill="none" stroke="#fff" strokeWidth="1.300" /><path d="M2 4H.500v10H2M18 4h1.500v10H18" fill="none" stroke="#fff" /></S></TaskIcon>
      <TaskIcon $w={50}><S w={22} h={24}><path d="M11 11C5 11 2 8 2 5s3-4 6-3 3 5 3 9zM11 11c0-6 3-9 6-9s4 3 3 6-5 3-9 3zM11 13c6 0 9 3 9 6s-3 4-6 3-3-5-3-9zM11 13c0 6-3 9-6 9s-4-3-3-6 5-3 9-3z" fill="#e6e6e6" /></S></TaskIcon>
      <TaskIcon $w={54}><S w={22} h={26}><ellipse cx="11" cy="13" rx="9" ry="9" fill="#e6e6e6" /><ellipse cx="11" cy="12" rx="5" ry="3" fill="#050d12" /><rect x="5" y="12.500" width="12" height="2" fill="#e6e6e6" /><path d="M14 20c4-1 5-3 6-5l-4 0c-1 2-2 3-3 3" fill="#050d12" /></S></TaskIcon>
      <TaskIcon $w={44}><S w={20} h={20}><path d="M17 4C10-1 2 4 2 11s8 9 12 6 3-8-1-9-7 3-4 6" fill="none" stroke="#c8c8c8" strokeWidth="1.800" /></S></TaskIcon>
      <TaskGap $w={11} /><TaskSep /><TaskGap $w={16} />
      <TaskIcon $w={50}><S w={22} h={22}><path d="M2 11C2 4 7 1 12 1c5 0 9 4 9 11H8c0 4 7 6 12 3v5c-8 3-18 0-18-9zm6-2h7c0-4-6-4-7 0z" fill="#1a7fd6" /></S></TaskIcon>
      <TaskIcon $w={46}><S w={22} h={20}><path d="M1 3h7l2 2h11v14H1z" fill="#f3cf6a" /><rect x="8" y="11" width="6" height="8" fill="#3aa6e8" /></S></TaskIcon>
      <TaskGap $w={2} />
      <TaskIcon $w={48}><S w={26} h={26}><circle cx="13" cy="13" r="9" fill="#fff" /><path d="M13 5c5 0 8 3 8 8H9c0 4 6 6 11 3-2 5-8 6-12 4S3 13 5 9s5-4 8-4zm-4 5h8c0-4-7-4-8 0z" fill="#1f8fe0" /><path d="M4 23C1 20 9 6 22 2c3 0-2 6-3 7" fill="none" stroke="#f1c232" strokeWidth="1.500" /></S></TaskIcon>
      <TaskGap $w={4} />
      <TaskIcon $w={40} $run><S w={24} h={26}><ellipse cx="12" cy="13" rx="10" ry="11" fill="#b8dc6c" /><ellipse cx="12" cy="13" rx="7" ry="9" fill="#fff" /><ellipse cx="12" cy="13" rx="5" ry="7" fill="#7cc242" /><path d="M8 12h8v2H8z" fill="#fff" /></S></TaskIcon>
      <TaskGap $w={9} />
      <TaskIcon $w={40} $run><S w={24} h={26}><path d="M22 3C12 0 2 4 3 15c1 9 16 11 18 2 1-6-6-8-9-5 2 0 5 1 5 4s-7 2-8-2c-1-6 6-10 13-11z" fill="#1d9be8" /></S></TaskIcon>
      <TaskGap $w={5} />
      <TaskIcon $w={48} $run $active><S w={24} h={26}><rect x="0" y="0" width="24" height="26" rx="4" fill="#0f96f2" /><path d="M12 5v16M5 12c0-4 7-2 7 1s7 5 7 1-7-2-7 1-7 1-7-3z" stroke="#fff" fill="none" strokeWidth="1.500" /></S></TaskIcon>
      <TaskGap $w={5} />
      <TaskIcon $w={40} $run><S w={25} h={26}><rect x="1" y="1" width="23" height="24" rx="2" fill="#f3b12a" /><rect x="5" y="6" width="14" height="16" fill="#fff6dc" transform="rotate(-10 12 14)" /><path d="M7 10l9-2M7 14l9-2M8 18l9-2" stroke="#999" /><path d="M22 2l-9 14" stroke="#c83a1a" strokeWidth="1.500" /></S></TaskIcon>
      <TaskGap $w={26} />
      <Cpu>18%<br />CPU使用</Cpu>
      <TaskGap $w={1} />
      <Tray $w={26}><S w={14} h={10}><path d="M1 8l6-6 6 6" stroke="#fff" fill="none" strokeWidth="1.200" /></S></Tray>
      <Tray $w={24}><S w={16} h={16}><rect x="3" y="6" width="12" height="8" fill="#ddd" /><path d="M4 2v4M7 2v4M2 6h7" stroke="#fff" /></S></Tray>
      <TaskGap $w={1} />
      <Tray $w={24}><S w={18} h={18}><path d="M2 16A14 14 0 0 1 16 3M5 16A11 11 0 0 1 16 6M8 16a8 8 0 0 1 8-7M11 16a5 5 0 0 1 5-4" fill="none" stroke="#ddd" strokeDasharray="1.500 1" /></S></Tray>
      <Tray $w={22}><S w={16} h={16}><path d="M1 6h3l4-4v12l-4-4H1zM10 5c2 1 2 5 0 6M12 3c3 2 3 8 0 10" fill="none" stroke="#ddd" /></S></Tray>
      <Tray $w={34}><S w={24} h={16}><rect x=".500" y=".500" width="23" height="15" fill="none" stroke="#fff" /><path d="M3 4h18M3 7h18M3 10h18M7 13h10" stroke="#fff" strokeDasharray="1.500 1" /></S></Tray>
      <Tray $w={20}>中</Tray>
      <TaskGap $w={7} />
      <Tray $w={24}><TraySogou>S</TraySogou></Tray>
      <Clock>12:36<br />2017/12/13</Clock>
      <Notice>
        <S w={18} h={18}><path d="M1 1h15v13H6l-3 3v-3H1z" fill="#eee" /><path d="M4 5h9M4 8h9" stroke="#222" /></S>
        <NoticeBadge>2</NoticeBadge>
      </Notice>
    </Task>

    <Ball>66</Ball>
    <Sogou>
      <SogouLogo>S</SogouLogo>
      <SogouItem>中</SogouItem>
      <SogouItem>°,</SogouItem>
      <SogouItem><S><circle cx="8" cy="8" r="7" fill="none" stroke="#0b76d0" strokeWidth="1.500" /><circle cx="5.500" cy="6.500" r="1" fill="#0b76d0" /><circle cx="10.500" cy="6.500" r="1" fill="#0b76d0" /><path d="M4.500 10c2 2.500 5 2.500 7 0" stroke="#0b76d0" fill="none" /></S></SogouItem>
      <SogouItem><S><rect x="5" y="1" width="6" height="10" rx="3" fill="#0b76d0" /><path d="M3 8c0 6 10 6 10 0M8 13v3" stroke="#0b76d0" fill="none" /></S></SogouItem>
      <SogouItem><S><rect x="1" y="3" width="14" height="10" rx="1.500" fill="#0b76d0" /><path d="M3 6h10M3 8h10M5 10.500h6" stroke="#fff" strokeDasharray="1.500 1" /></S></SogouItem>
      <SogouItem><S><circle cx="6" cy="4" r="3" fill="#aebfca" /><path d="M1 14c0-6 9-6 9 0z" fill="#aebfca" /><rect x="8" y="9" width="8" height="6" fill="#fff" stroke="#aebfca" /></S></SogouItem>
      <SogouItem><S><path d="M5 1H2L1 6h2.500v9h9V6H15l-1-5h-3c-1 2-5 2-6 0z" fill="#0b76d0" /></S></SogouItem>
      <SogouItem><S><path d="M15 4l-3 3-3-1-1-3 3-2c-3-1-6 2-5 5L1 12a2 2 0 0 0 3 3l5-5c3 1 6-2 6-6z" fill="#0b76d0" /></S></SogouItem>
    </Sogou>
    <Rings width="1366" height="768">
      <ellipse cx="217" cy="190.500" rx="77.500" ry="20.500" fill="none" stroke="#f20c0c" strokeWidth="7" />
      <ellipse cx="77" cy="466.500" rx="72" ry="26" fill="none" stroke="#f20c0c" strokeWidth="7" />
    </Rings>
  </Page>
);

export default App;
